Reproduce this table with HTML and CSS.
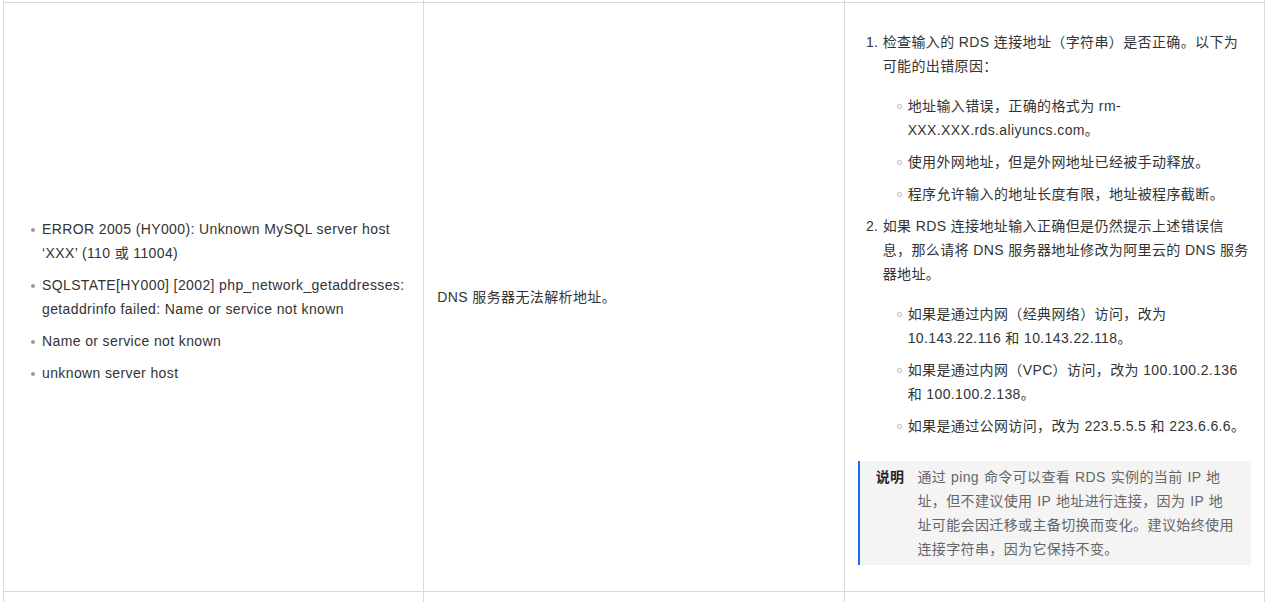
FILE: index.html
```html
<!DOCTYPE html>
<html lang="zh-CN">
<head>
<meta charset="utf-8">
<title>RDS 连接错误</title>
<link rel="stylesheet" href="styles.css">
</head>
<body>
<table class="err-table">
  <colgroup><col class="col"><col class="col"><col class="col"></colgroup>
  <tbody>
    <tr class="stub"><td></td><td></td><td></td></tr>
    <tr class="row">
      <td class="cell">
        <ul class="dot-list">
          <li><span>ERROR 2005 (HY000): Unknown MySQL server host ‘XXX’ (110 或 11004)</span></li>
          <li><span>SQLSTATE[HY000] [2002] php_network_getaddresses: getaddrinfo failed: Name or service not known</span></li>
          <li><span>Name or service not known</span></li>
          <li><span>unknown server host</span></li>
        </ul>
      </td>
      <td class="cell">
        <p class="cause">DNS 服务器无法解析地址。</p>
      </td>
      <td class="cell cell-fix">
        <ol class="steps">
          <li class="step">
            <p class="step-text">检查输入的 RDS 连接地址（字符串）是否正确。以下为可能的出错原因：</p>
            <ul class="circle-list">
              <li><span>地址输入错误，正确的格式为 rm-XXX.XXX.rds.aliyuncs.com。</span></li>
              <li><span>使用外网地址，但是外网地址已经被手动释放。</span></li>
              <li><span>程序允许输入的地址长度有限，地址被程序截断。</span></li>
            </ul>
          </li>
          <li class="step">
            <p class="step-text">如果 RDS 连接地址输入正确但是仍然提示上述错误信息，那么请将 DNS 服务器地址修改为阿里云的 DNS 服务器地址。</p>
            <ul class="circle-list">
              <li><span>如果是通过内网（经典网络）访问，改为 10.143.22.116 和 10.143.22.118。</span></li>
              <li><span>如果是通过内网（VPC）访问，改为 100.100.2.136 和 100.100.2.138。</span></li>
              <li><span>如果是通过公网访问，改为 223.5.5.5 和 223.6.6.6。</span></li>
            </ul>
          </li>
        </ol>
        <div class="note">
          <strong class="note-label">说明</strong>
          <div class="note-body">通过 ping 命令可以查看 RDS 实例的当前 IP 地址，但不建议使用 IP 地址进行连接，因为 IP 地址可能会因迁移或主备切换而变化。建议始终使用连接字符串，因为它保持不变。</div>
        </div>
      </td>
    </tr>
    <tr class="after"><td></td><td></td><td></td></tr>
  </tbody>
</table>
</body>
</html>
```
FILE: styles.css
```css
body {
  margin: 0;
  background: #fff;
  color: #333;
  font-family: "Liberation Sans", Arial, "Noto Sans CJK SC", sans-serif;
  font-size: 14px;
  letter-spacing: 0.38px;
  line-height: 24px;
}

.err-table {
  border-collapse: collapse;
  table-layout: fixed;
  width: 1262px;
  margin-left: 3px;
}

.err-table td {
  border: 1px solid #dadada;
  padding: 12px 13px;
  vertical-align: middle;
}

.err-table .stub td {
  border-top: none;
  padding: 0;
  height: 2px;
}

.err-table .after td {
  border-bottom: none;
  height: 40px;
}

.dot-list,
.circle-list,
.steps {
  margin: 0;
}

.dot-list {
  list-style: none;
  padding: 0 0 0 14px;
}

.dot-list li {
  display: flex;
  margin-top: 8px;
}

.dot-list li::before {
  content: "";
  flex: none;
  width: 4px;
  height: 4px;
  border-radius: 50%;
  background: #9a9a9a;
  margin: 11px 7px 0 0;
}

.cause {
  margin: 0;
}

.steps {
  margin: 15px 0 0;
  padding: 0 0 0 25px;
}

.step + .step {
  margin-top: 8px;
}

.step-text {
  margin: 0;
}

.circle-list {
  list-style: none;
  margin-top: 16px;
  padding: 0 0 0 14px;
}

.circle-list li {
  display: flex;
}

.circle-list li + li {
  margin-top: 8px;
}

.circle-list li::before {
  content: "";
  flex: none;
  box-sizing: border-box;
  width: 5px;
  height: 5px;
  border: 1px solid #b5b5b5;
  border-radius: 50%;
  margin: 10px 6px 0 0;
}

.note {
  display: flex;
  margin: 23px 0 14px;
  padding: 4px 16px 4px 16px;
  background: #f4f4f4;
  border-left: 2px solid #1f6ef0;
}

.note-label {
  flex: none;
  font-weight: bold;
  color: #262626;
  margin-right: 13px;
}

.note-body {
  flex: 1;
  color: #666;
  word-spacing: 0.6px;
}
```
